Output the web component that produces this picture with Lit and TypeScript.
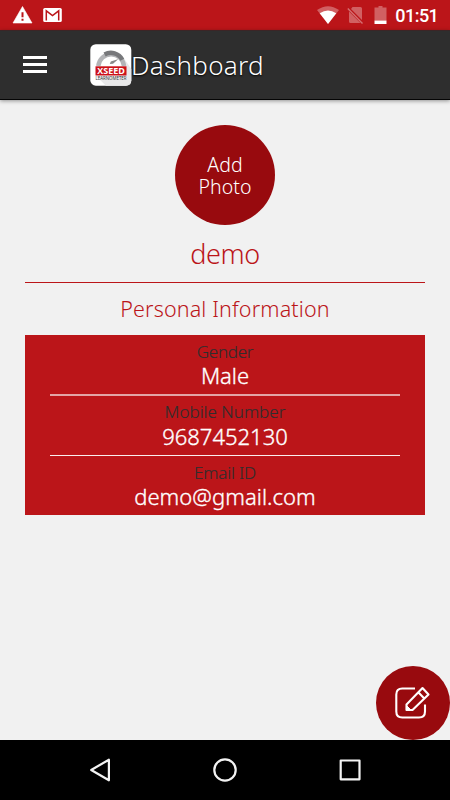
import { LitElement, html, css } from "lit";
import { customElement } from "lit/decorators.js";

interface Field {
  key: string;
  label: string;
  value: string;
}

const FIELDS: Field[] = [
  { key: "gender", label: "Gender", value: "Male" },
  { key: "mobile", label: "Mobile Number", value: "9687452130" },
  { key: "email", label: "Email ID", value: "demo@gmail.com" },
];

@customElement("status-bar")
class StatusBar extends LitElement {
  static styles = css`
    :host { display: block; height: 30px; background: #bb1519; }
    svg { display: block; }
    .clock { font: 500 18px Roboto, sans-serif; fill: #fff; }
  `;
  render() {
    return html`<svg width="450" height="30" viewBox="0 0 450 30">
      <path d="M22.5 6.5L32 23H13Z" fill="#fff" stroke="#fff" stroke-width=".6" stroke-linejoin="round" />
      <path d="M21.500 12.300h2v5h-2zM21.500 18.800h2v2h-2z" fill="#bb1519" />
      <rect x="43.200" y="8" width="18.600" height="14" rx="1.600" fill="#fff" />
      <path d="M46.300 20.500V10.800L52.500 15.600L58.700 10.800V20.500" fill="none" stroke="#bb1519" stroke-width="1.500" />
      <path d="M317 10Q328 2.300 339 10L328 24Z" fill="#fff" opacity=".32" />
      <path d="M319.700 13.200Q328 8 336.300 13.200L328 24Z" fill="#fff" />
      <path d="M352.500 7H360.500Q362 7 362 8.500V20L351 9ZM349 11.500L360.500 23H350.500Q349 23 349 21.500Z" fill="#fff" opacity=".32" />
      <path d="M347.800 8.500L362.500 23.500" stroke="#fff" stroke-width="1.400" opacity=".38" />
      <path d="M378.500 6h4v1.600h4V20.500H374.500V7.600h4z" fill="#fff" opacity=".32" />
      <path d="M374.500 20.500h12v3.500h-12z" fill="#fff" />
      <text class="clock" x="395.300" y="22" textLength="43.500">01:51</text>
    </svg>`;
  }
}

@customElement("app-header")
class AppHeader extends LitElement {
  static styles = css`
    :host {
      display: flex; align-items: center; box-sizing: border-box; height: 70px;
      background: #2e2e2e; border-top: 1px solid #3b2526; border-bottom: 1px solid #050505;
      box-shadow: 0 1px 4px rgba(0, 0, 0, 0.4); position: relative;
    }
    .menu { margin: -1px 0 0 23px; width: 24px; height: 17px; display: flex; flex-direction: column; justify-content: space-between; }
    .menu i { height: 3px; background: #fff; }
    .logo { margin-left: 42.5px; display: block; }
    .brand { font: 700 8.4px "Open Sans", sans-serif; fill: #fff; }
    .sub { font: 400 4.8px "Open Sans", sans-serif; fill: #333; }
    h1 { margin: 0 0 0 -0.5px; font: 300 26px/34px "Noto Sans", sans-serif; color: #fff; letter-spacing: 0.3px; text-shadow: 0 1px 2px #000; }
  `;
  render() {
    return html`
      <div class="menu"><i></i><i></i><i></i></div>
      <svg class="logo" width="42" height="42" viewBox="0 0 42 42">
        <rect x=".3" y=".2" width="41" height="41.500" rx="5.500" fill="#fff" />
        <path d="M33 13L41.300 25V36.500Q41.300 41.700 36 41.700H16L6 32H33Z" fill="#e8e8e9" />
        <path d="M8.300 22A12.900 12.900 0 0 1 34 22" fill="none" stroke="#b3b4b7" stroke-width="4.400" />
        <path d="M14.600 10.500A12.900 12.900 0 0 1 32.300 15.700" fill="none" stroke="#77787b" stroke-width="4.400" />
        <path d="M28.500 15L23 19.800L19.800 20L20.800 17.600Z" fill="#888" />
        <rect x="5.500" y="22.300" width="31" height="9.200" fill="#cc1118" />
        <text class="brand" x="7.300" y="30" textLength="27.500" lengthAdjust="spacingAndGlyphs">XSEED</text>
        <text class="sub" x="5.500" y="36" textLength="31" lengthAdjust="spacingAndGlyphs">LEARNOMETER</text>
      </svg>
      <h1>Dashboard</h1>`;
  }
}

@customElement("nav-bar")
class NavBar extends LitElement {
  static styles = css`
    :host { display: block; height: 60px; background: #000; }
    svg { display: block; fill: none; stroke: #f3f3f3; stroke-width: 2.2; stroke-linejoin: round; }
  `;
  render() {
    return html`<svg width="450" height="60" viewBox="0 0 450 60">
      <path d="M91.200 30L108.900 19.700V40.300Z" />
      <circle cx="225" cy="30" r="10.700" />
      <rect x="340.700" y="20.500" width="18.800" height="18.800" />
    </svg>`;
  }
}

@customElement("app-root")
class AppRoot extends LitElement {
  static styles = css`
    :host {
      display: flex; flex-direction: column; width: 450px; height: 800px; overflow: hidden;
      background: #f1f1f1; font-family: "Noto Sans", sans-serif; font-weight: 300;
    }
    main { flex: 1; position: relative; padding: 25px 25px 0; text-align: center; }
    .photo {
      display: flex; flex-direction: column; justify-content: center; width: 100px; height: 100px;
      box-sizing: border-box; margin: 0 auto; padding-top: 2px; border-radius: 50%;
      background: #980a0e; color: #fff; font-size: 19.5px; line-height: 22px; letter-spacing: 0.1px;
    }
    .name { height: 46px; margin-top: 11px; border-bottom: 1px solid #bb1519; font-size: 27px; line-height: 36px; color: #bb1519; letter-spacing: -0.4px; }
    .section { font-size: 21.5px; line-height: 52px; color: #bb1519; letter-spacing: 0.15px; }
    .card { height: 180px; background: #bb1519; padding: 0 25px; }
    .row { box-sizing: border-box; height: 60px; padding-top: 5px; border-bottom: 1px solid #fbeeee; }
    .row.gender { height: 61px; padding-top: 6px; border-bottom: 2px solid #e3a5a6; }
    .row.email { border: 0; height: 59px; padding-top: 6px; }
    .label { font-size: 17px; line-height: 22px; color: #2e2e2e; -webkit-text-stroke: 0.15px #2e2e2e; }
    .value { font-size: 22px; line-height: 25px; color: #fff; -webkit-text-stroke: 0.35px #fff; }
    .gender .label { letter-spacing: -0.3px; }
    .email .label { letter-spacing: -0.2px; }
    .email .value { letter-spacing: 0.05px; }
    .mobile .value { line-height: 26px; }
    .edit {
      position: absolute; right: 0.5px; bottom: 0; width: 74px; height: 74px; border-radius: 50%;
      background: #980a0e;
    }
    .edit svg { display: block; fill: none; stroke: #fff; stroke-width: 2.1; stroke-linejoin: round; }
  `;
  render() {
    return html`
      <status-bar></status-bar>
      <app-header></app-header>
      <main>
        <div class="photo"><span>Add</span><span>Photo</span></div>
        <div class="name">demo</div>
        <div class="section">Personal Information</div>
        <div class="card">
          ${FIELDS.map((f) => html`<div class="row ${f.key}">
            <div class="label">${f.label}</div>
            <div class="value">${f.value}</div>
          </div>`)}
        </div>
        <div class="edit">
          <svg width="74" height="74" viewBox="0 0 74 74">
            <path d="M39 22.500H26.300Q20.300 22.500 20.300 28.500V45.500Q20.300 51.500 26.300 51.500H43Q49 51.500 49 45.500V38.500" />
            <path d="M30.500 44V38.500L46.500 22L52.500 28.500L36.500 44ZM42.300 26.300L48.300 32.500" />
            <path d="M30.500 39.500L35 44H30.500Z" fill="#fff" stroke-width="1" />
          </svg>
        </div>
      </main>
      <nav-bar></nav-bar>`;
  }
}
